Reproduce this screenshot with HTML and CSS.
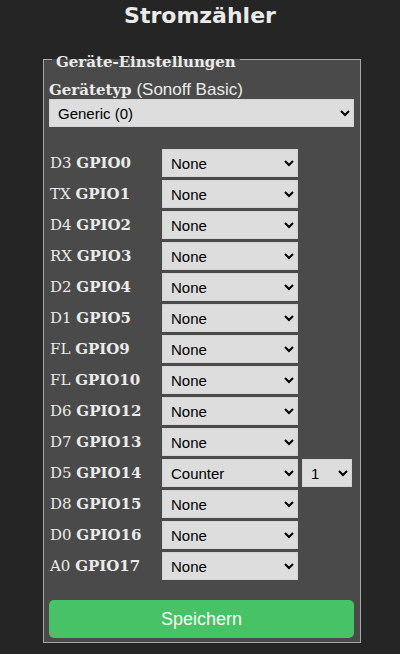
FILE: index.html
```html
<!DOCTYPE html>
<html lang="de">

<head>
    <meta charset="UTF-8">
    <meta name="viewport" content="width=device-width, initial-scale=1.0">
    <title>Stromzähler</title>

    <link rel="stylesheet" href="styles.css">
</head>

<body>
    <h2 class="title">Stromzähler</h2>

    <div class="wrap">
        <fieldset class="box">
            <legend class="box__legend">Geräte-Einstellungen</legend>

            <div class="box__type"><b>Gerätetyp</b> <span class="box__module">(Sonoff Basic)</span></div>
            <select class="sel sel--wide">
                <option>Generic (0)</option>
            </select>

            <div class="gpio">
                <div class="gpio__label">D3 <b>GPIO0</b></div>
                <div><select class="sel"><option>None</option></select></div>
                <div></div>

                <div class="gpio__label">TX <b>GPIO1</b></div>
                <div><select class="sel"><option>None</option></select></div>
                <div></div>

                <div class="gpio__label">D4 <b>GPIO2</b></div>
                <div><select class="sel"><option>None</option></select></div>
                <div></div>

                <div class="gpio__label">RX <b>GPIO3</b></div>
                <div><select class="sel"><option>None</option></select></div>
                <div></div>

                <div class="gpio__label">D2 <b>GPIO4</b></div>
                <div><select class="sel"><option>None</option></select></div>
                <div></div>

                <div class="gpio__label">D1 <b>GPIO5</b></div>
                <div><select class="sel"><option>None</option></select></div>
                <div></div>

                <div class="gpio__label">FL <b>GPIO9</b></div>
                <div><select class="sel"><option>None</option></select></div>
                <div></div>

                <div class="gpio__label">FL <b>GPIO10</b></div>
                <div><select class="sel"><option>None</option></select></div>
                <div></div>

                <div class="gpio__label">D6 <b>GPIO12</b></div>
                <div><select class="sel"><option>None</option></select></div>
                <div></div>

                <div class="gpio__label">D7 <b>GPIO13</b></div>
                <div><select class="sel"><option>None</option></select></div>
                <div></div>

                <div class="gpio__label">D5 <b>GPIO14</b></div>
                <div><select class="sel"><option>Counter</option></select></div>
                <div><select class="sel sel--index"><option>1</option></select></div>

                <div class="gpio__label">D8 <b>GPIO15</b></div>
                <div><select class="sel"><option>None</option></select></div>
                <div></div>

                <div class="gpio__label">D0 <b>GPIO16</b></div>
                <div><select class="sel"><option>None</option></select></div>
                <div></div>

                <div class="gpio__label">A0 <b>GPIO17</b></div>
                <div><select class="sel"><option>None</option></select></div>
                <div></div>
            </div>

            <button class="save">Speichern</button>
        </fieldset>
    </div>
</body>

</html>
```

FILE: styles.css
```css
body {
    margin: 0;
    background-color: #252525;
    color: #eaeaea;
    font-family: "DejaVu Serif", serif;
    font-size: 15px;
}

.title {
    margin: 0;
    padding-top: 2px;
    text-align: center;
    font-family: "DejaVu Sans", sans-serif;
    font-size: 22px;
    line-height: 28px;
    font-weight: bold;
}

.wrap {
    width: 318px;
    margin: 16px 0 0 43px;
}

.box {
    margin: 0;
    padding: 0 6px 4px 5px;
    border: 1px solid #a8a8a8;
    background-color: #4a4a4a;
}

.box__legend {
    margin-left: 3px;
    padding: 6px 4px 0;
    font-weight: bold;
    line-height: 20px;
}

.box__type {
    margin-top: 9px;
    line-height: 18px;
}

.box__module {
    font-family: "Liberation Sans", Arial, sans-serif;
    font-size: 17px;
}

.sel {
    display: block;
    width: 136px;
    height: 28px;
    padding: 0 6px 0 4px;
    border: 1px solid #d4d4d4;
    background-color: #dddddd;
    color: #000;
    font-family: "Liberation Sans", Arial, sans-serif;
    font-size: 15px;
}

.sel--wide {
    width: 100%;
}

.sel--index {
    width: 50px;
}

.gpio {
    display: grid;
    grid-template-columns: 109px 136px 1fr;
    column-gap: 4px;
    row-gap: 3px;
    margin-top: 22px;
}

.gpio__label {
    padding-left: 1px;
    line-height: 28px;
    white-space: nowrap;
}

.save {
    display: block;
    width: 100%;
    height: 38px;
    margin-top: 20px;
    border: 0;
    border-radius: 5px;
    background-color: #47c266;
    color: #f4fff6;
    font-family: "Liberation Sans", Arial, sans-serif;
    font-size: 18px;
}
```
